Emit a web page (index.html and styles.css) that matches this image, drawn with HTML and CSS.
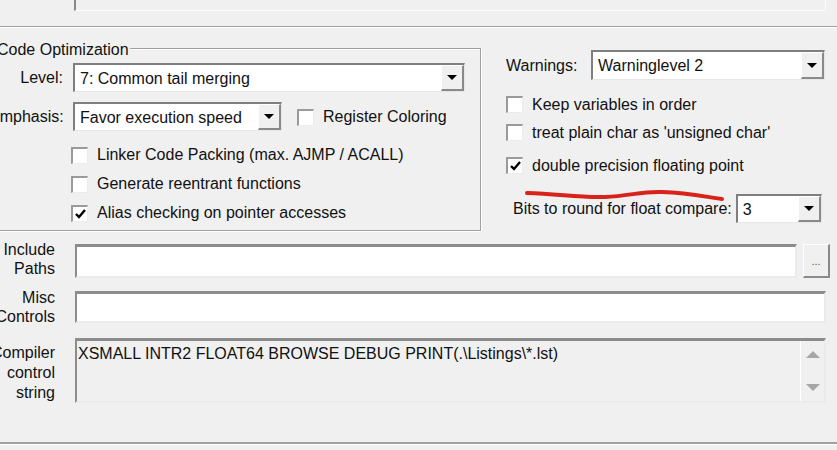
FILE: index.html
```html
<!DOCTYPE html>
<html lang="en">
<head>
    <title>Options for Target - C51</title>
    <link rel="stylesheet" href="styles.css">
</head>
<body>
    <div class="top-field"></div>
    <div class="separator"></div>

    <div class="main">
        <div class="group">
            <span class="group-title">Code Optimization</span>

            <div class="field-row">
                <label class="field-label">Level:</label>
                <div class="combo combo-level">
                    <span class="combo-text">7: Common tail merging</span>
                    <span class="combo-btn"><span class="arrow-down"></span></span>
                </div>
            </div>

            <div class="field-row row-emphasis">
                <label class="field-label">Emphasis:</label>
                <div class="combo combo-emphasis">
                    <span class="combo-text">Favor execution speed</span>
                    <span class="combo-btn"><span class="arrow-down"></span></span>
                </div>
                <div class="check check-inline"><span class="box"></span>Register Coloring</div>
            </div>

            <div class="check-list">
                <div class="check"><span class="box"></span>Linker Code Packing (max. AJMP / ACALL)</div>
                <div class="check"><span class="box"></span>Generate reentrant functions</div>
                <div class="check">
                    <span class="box"><svg width="11" height="10" viewBox="0 0 11 10"><polyline points="1,5 4,8 10,1" fill="none" stroke="#000" stroke-width="2.4"/></svg></span>
                    Alias checking on pointer accesses
                </div>
            </div>
        </div>

        <div class="side">
            <div class="field-row row-warnings">
                <label class="side-label">Warnings:</label>
                <div class="combo combo-warnings">
                    <span class="combo-text">Warninglevel 2</span>
                    <span class="combo-btn"><span class="arrow-down"></span></span>
                </div>
            </div>
            <div class="check side-check first"><span class="box"></span>Keep variables in order</div>
            <div class="check side-check"><span class="box"></span>treat plain char as 'unsigned char'</div>
            <div class="check side-check spaced">
                <span class="box"><svg width="11" height="10" viewBox="0 0 11 10"><polyline points="1,5 4,8 10,1" fill="none" stroke="#000" stroke-width="2.4"/></svg></span>
                double precision floating point
            </div>
            <div class="field-row row-bits">
                <label class="bits-label">Bits to round for float compare:</label>
                <div class="combo combo-bits">
                    <span class="combo-text">3</span>
                    <span class="combo-btn"><span class="arrow-down"></span></span>
                </div>
            </div>
        </div>
    </div>

    <div class="paths">
        <div class="path-row row-include">
            <label class="path-label label-include">Include<br>Paths</label>
            <div class="edit edit-include"></div>
            <button class="browse-btn">...</button>
        </div>
        <div class="path-row row-misc">
            <label class="path-label">Misc<br>Controls</label>
            <div class="edit edit-wide"></div>
        </div>
        <div class="path-row row-compiler">
            <label class="path-label label-compiler">Compiler<br>control<br>string</label>
            <div class="edit edit-wide edit-readonly">
                <span class="edit-text">XSMALL INTR2 FLOAT64 BROWSE DEBUG PRINT(.\Listings\*.lst)</span>
                <span class="scrollbar">
                    <span class="arrow-up-gray"></span>
                    <span class="arrow-down-gray"></span>
                </span>
            </div>
        </div>
    </div>

    <div class="footer-line"></div>

    <svg class="annotation" width="210" height="22" viewBox="0 0 210 22">
        <path d="M7,8 C40,9 60,13 85,12 C110,11 122,6 142,7 C170,8 186,12 202,14" fill="none" stroke="#d8231b" stroke-width="4" stroke-linecap="round"/>
    </svg>
</body>
</html>
```

FILE: styles.css
```css
* {
    box-sizing: border-box;
    margin: 0;
    padding: 0;
}

body {
    font-family: "Liberation Sans", Arial, sans-serif;
    font-size: 16px;
    color: #111;
    background: #f0f0f0;
    width: 837px;
    height: 450px;
    overflow: hidden;
    position: relative;
}

.top-field {
    margin-left: 74px;
    width: 752px;
    height: 11px;
    border-left: 2px solid #8a8a8a;
    border-right: 1px solid #fcfcfc;
    border-bottom: 1px solid #fcfcfc;
}

.separator {
    margin-top: 15px;
    border-top: 1px solid #a0a0a0;
    border-bottom: 1px solid #fff;
}

.main {
    display: flex;
    align-items: flex-start;
    margin-top: 20px;
}

/* group box */
.group {
    position: relative;
    margin-left: -12px;
    width: 493px;
    height: 183px;
    border: 1px solid #a0a0a0;
    box-shadow: inset 1px 1px 0 #fff, 1px 1px 0 #fff;
    padding: 14px 0 3px 0;
}

.group-title {
    position: absolute;
    top: -9px;
    left: 8px;
    padding-right: 1px;
    line-height: 19px;
    background: #f0f0f0;
}

.field-row {
    display: flex;
    align-items: center;
    height: 29px;
}

.field-label {
    width: 74px;
    margin-right: 10px;
    padding-top: 1px;
    text-align: right;
}

.row-emphasis {
    margin-top: 10px;
}

/* combo box */
.combo {
    display: flex;
    height: 29px;
    background: #fff;
    border-style: solid;
    border-width: 2px 1px 1px 2px;
    border-color: #7f7f7f #e6e6e6 #e6e6e6 #7f7f7f;
}

.combo-text {
    flex: 1;
    padding: 1px 0 0 5px;
    line-height: 25px;
    white-space: nowrap;
}

.combo-btn {
    width: 23px;
    display: flex;
    align-items: center;
    justify-content: center;
    background: #f0f0f0;
    border-top: 1px solid #fff;
    border-left: 1px solid #fff;
    border-right: 2px solid #8a8a8a;
    border-bottom: 2px solid #8a8a8a;
}

.arrow-down {
    width: 0;
    height: 0;
    border-left: 5px solid transparent;
    border-right: 5px solid transparent;
    border-top: 5px solid #000;
}

.combo-level { width: 392px; }
.combo-emphasis { width: 209px; }
.combo-warnings { width: 234px; height: 30px; }
.combo-bits { width: 86px; }

/* check boxes */
.check {
    display: flex;
    align-items: center;
    height: 29px;
    padding-top: 1px;
    white-space: nowrap;
}

.box {
    width: 17px;
    height: 17px;
    margin-right: 9px;
    display: flex;
    align-items: center;
    justify-content: center;
    background: #fff;
    border-style: solid;
    border-width: 2px 1px 1px 2px;
    border-color: #9a9a9a #ececec #ececec #9a9a9a;
}

.check-inline {
    margin-left: 15px;
}

.check-list {
    margin-top: 9px;
    margin-left: 82px;
}

/* right side */
.side {
    padding: 2px 0 0 25px;
}

.row-warnings {
    height: 30px;
}

.side-label {
    width: 85px;
    padding-top: 1px;
}

.side-check {
    height: 28px;
}

.side-check.first {
    margin-top: 10px;
}

.side-check.spaced {
    margin-top: 5px;
}

.row-bits {
    margin-top: 15px;
    margin-left: 7px;
}

.bits-label {
    margin-right: 4px;
    padding-top: 1px;
    white-space: nowrap;
}

/* path fields */
.paths {
    margin-top: 11px;
}

.path-row {
    display: flex;
    align-items: center;
}

.row-include { height: 38px; }
.row-misc { height: 38px; margin-top: 8px; }
.row-compiler { height: 65px; margin-top: 12px; }

.path-label {
    width: 70px;
    margin-left: -15px;
    margin-right: 20px;
    text-align: right;
    line-height: 19px;
}

.label-include {
    margin-top: -4px;
}

.label-compiler {
    line-height: 20px;
    margin-top: 4px;
}

.edit {
    height: 34px;
    background: #fff;
    border-style: solid;
    border-width: 3px 2px 2px 2px;
    border-color: #8c8c8c #ebebeb #ebebeb #8c8c8c;
}

.edit-include { width: 722px; }

.edit-wide {
    width: 751px;
    height: 32px;
}

.edit-readonly {
    height: 65px;
    display: flex;
    background: #f0f0f0;
}

.edit-text {
    flex: 1;
    padding: 3px 0 0 1px;
    line-height: 19px;
    white-space: nowrap;
}

.scrollbar {
    width: 24px;
    display: flex;
    flex-direction: column;
    align-items: center;
    justify-content: space-between;
    padding: 10px 0;
    border-left: 1px solid #fff;
}

.arrow-up-gray {
    border-left: 7px solid transparent;
    border-right: 7px solid transparent;
    border-bottom: 7px solid #a6a6a6;
}

.arrow-down-gray {
    border-left: 7px solid transparent;
    border-right: 7px solid transparent;
    border-top: 7px solid #a6a6a6;
}

.browse-btn {
    width: 27px;
    height: 34px;
    margin-left: 6px;
    background: #f0f0f0;
    font-family: "Liberation Sans", Arial, sans-serif;
    font-size: 11px;
    color: #555;
    display: flex;
    align-items: flex-end;
    justify-content: center;
    padding-bottom: 9px;
    border-style: solid;
    border-width: 1px 2px 2px 1px;
    border-color: #fff #8a8a8a #8a8a8a #fff;
}

.footer-line {
    margin-top: 39px;
    border-top: 2px solid #a0a0a0;
    border-bottom: 1px solid #fff;
}

/* red hand-drawn mark over the label */
.annotation {
    position: absolute;
    left: 520px;
    top: 185px;
}
```
